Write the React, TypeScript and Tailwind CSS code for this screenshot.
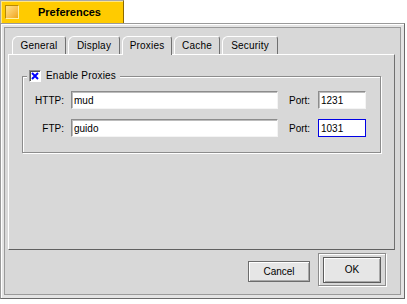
import React from "react";

const tabs = [
  { label: "General", cls: "w-[54px]", active: false },
  { label: "Display", cls: "w-[52px]", active: false },
  { label: "Proxies", cls: "w-[50px]", active: true },
  { label: "Cache", cls: "w-[46px]", active: false },
  { label: "Security", cls: "w-[56px]", active: false },
];

function Tab({ label, cls, active }: { label: string; cls: string; active: boolean }) {
  return (
    <div
      className={
        cls +
        " relative flex h-[18px] items-center justify-center rounded-tl-[6px] rounded-tr-[3px] border-t border-l border-r border-t-white border-l-white border-r-[#707070] text-[10px] tracking-[0.2px] text-black " +
        (active ? "z-10 h-[19px] -mb-px bg-[#d8d8d8] pb-px" : "")
      }
    >
      {label}
    </div>
  );
}

function Field({ value, cls, focused }: { value: string; cls: string; focused?: boolean }) {
  return (
    <div
      className={
        cls +
        " flex h-[18px] items-center bg-white pl-[2px] text-[10px] text-black " +
        (focused
          ? "border border-[#0000e6]"
          : "border border-t-[#8c8c8c] border-l-[#8c8c8c] border-b-[#f4f4f4] border-r-[#f4f4f4] shadow-[inset_1px_1px_0_#bcbcbc]")
      }
    >
      {value}
    </div>
  );
}

export default function App() {
  return (
    <div className="h-[304px] w-[407px] bg-white font-['Liberation_Sans',Arial,sans-serif]">
      {/* Title tab */}
      <div className="flex h-[23px] w-[124px] items-center border border-b-0 border-[#a8a8a8] border-r-[#8c6a00] bg-[#ffcb00] shadow-[inset_1px_1px_0_#ffe680]">
        <div className="ml-[4px] h-[14px] w-[14px] border border-t-[#b88a00] border-l-[#b88a00] border-b-[#fff0a0] border-r-[#fff0a0] bg-linear-to-br from-[#ffe488] to-[#f0a400]" />
        <span className="ml-[19px] text-[11px] font-bold text-black">Preferences</span>
      </div>

      {/* Window frame */}
      <div className="h-[276px] w-[405px] border border-[#9a9a9a] border-b-[#6a6a6a] border-r-[#6a6a6a] bg-[#e4e4e4] p-[3px] shadow-[inset_1px_1px_0_#ffffff]">
        <div className="flex h-full w-full flex-col border border-[#9a9a9a] bg-[#d8d8d8]">
          {/* Tabs */}
          <div className="flex gap-[2px] pl-[7px] pt-[8px]">
            {tabs.map((t) => (
              <Tab key={t.label} {...t} />
            ))}
          </div>

          {/* Tab panel */}
          <div className="ml-[3px] h-[196px] w-[387px] border-t border-l border-r border-b border-t-white border-l-white border-r-[#707070] border-b-[#606060]">
            {/* Group box */}
            <div className="relative ml-[13px] mt-[21px] h-[77px] w-[359px] border border-[#8c8c8c] shadow-[1px_1px_0_#ffffff,inset_1px_1px_0_#ffffff]">
              <div className="absolute -top-[7px] left-[4px] flex h-[12px] items-center bg-[#d8d8d8] pl-[2px] pr-[4px]">
                <div className="flex h-[12px] w-[12px] items-center justify-center border border-t-[#8c8c8c] border-l-[#8c8c8c] border-b-white border-r-white bg-white shadow-[inset_1px_1px_0_#505050]">
                  <svg width="10" height="10" viewBox="0 0 10 10">
                    <path d="M2 2 L8 8 M8 2 L2 8" stroke="#0000ff" strokeWidth="2" />
                  </svg>
                </div>
                <span className="ml-[5px] text-[10px] leading-none tracking-[0.2px] text-black">Enable Proxies</span>
              </div>

              <div className="flex flex-col pt-[14px]">
                <div className="flex items-center">
                  <div className="w-[41px] text-right text-[10px] text-black">HTTP:</div>
                  <Field value="mud" cls="ml-[7px] w-[207px]" />
                  <div className="ml-[11px] w-[22px] text-[10px] text-black">Port:</div>
                  <Field value="1231" cls="ml-[7px] w-[48px]" />
                </div>
                <div className="mt-[10px] flex items-center">
                  <div className="w-[41px] text-right text-[10px] text-black">FTP:</div>
                  <Field value="guido" cls="ml-[7px] w-[207px]" />
                  <div className="ml-[11px] w-[22px] text-[10px] text-black">Port:</div>
                  <Field value="1031" cls="ml-[7px] w-[48px]" focused />
                </div>
              </div>
            </div>
          </div>

          {/* Buttons */}
          <div className="flex flex-1 items-start justify-end pr-[14px]">
            <div className="mt-[11px] flex h-[21px] w-[62px] items-center justify-center border border-[#6c6c6c] bg-[#e6e6e6] text-[10px] text-black shadow-[inset_1px_1px_0_#ffffff,inset_-1px_-1px_0_#a8a8a8]">
              Cancel
            </div>
            <div className="ml-[8px] mt-[3px] flex h-[33px] w-[68px] items-center justify-center border border-[#8c8c8c] shadow-[1px_1px_0_#ffffff,inset_1px_1px_0_#ffffff]">
              <div className="flex h-[26px] w-[58px] items-center justify-center border border-[#5c5c5c] bg-[#e6e6e6] text-[10px] text-black shadow-[inset_1px_1px_0_#ffffff,inset_-1px_-1px_0_#a8a8a8]">
                OK
              </div>
            </div>
          </div>
        </div>
      </div>
    </div>
  );
}
